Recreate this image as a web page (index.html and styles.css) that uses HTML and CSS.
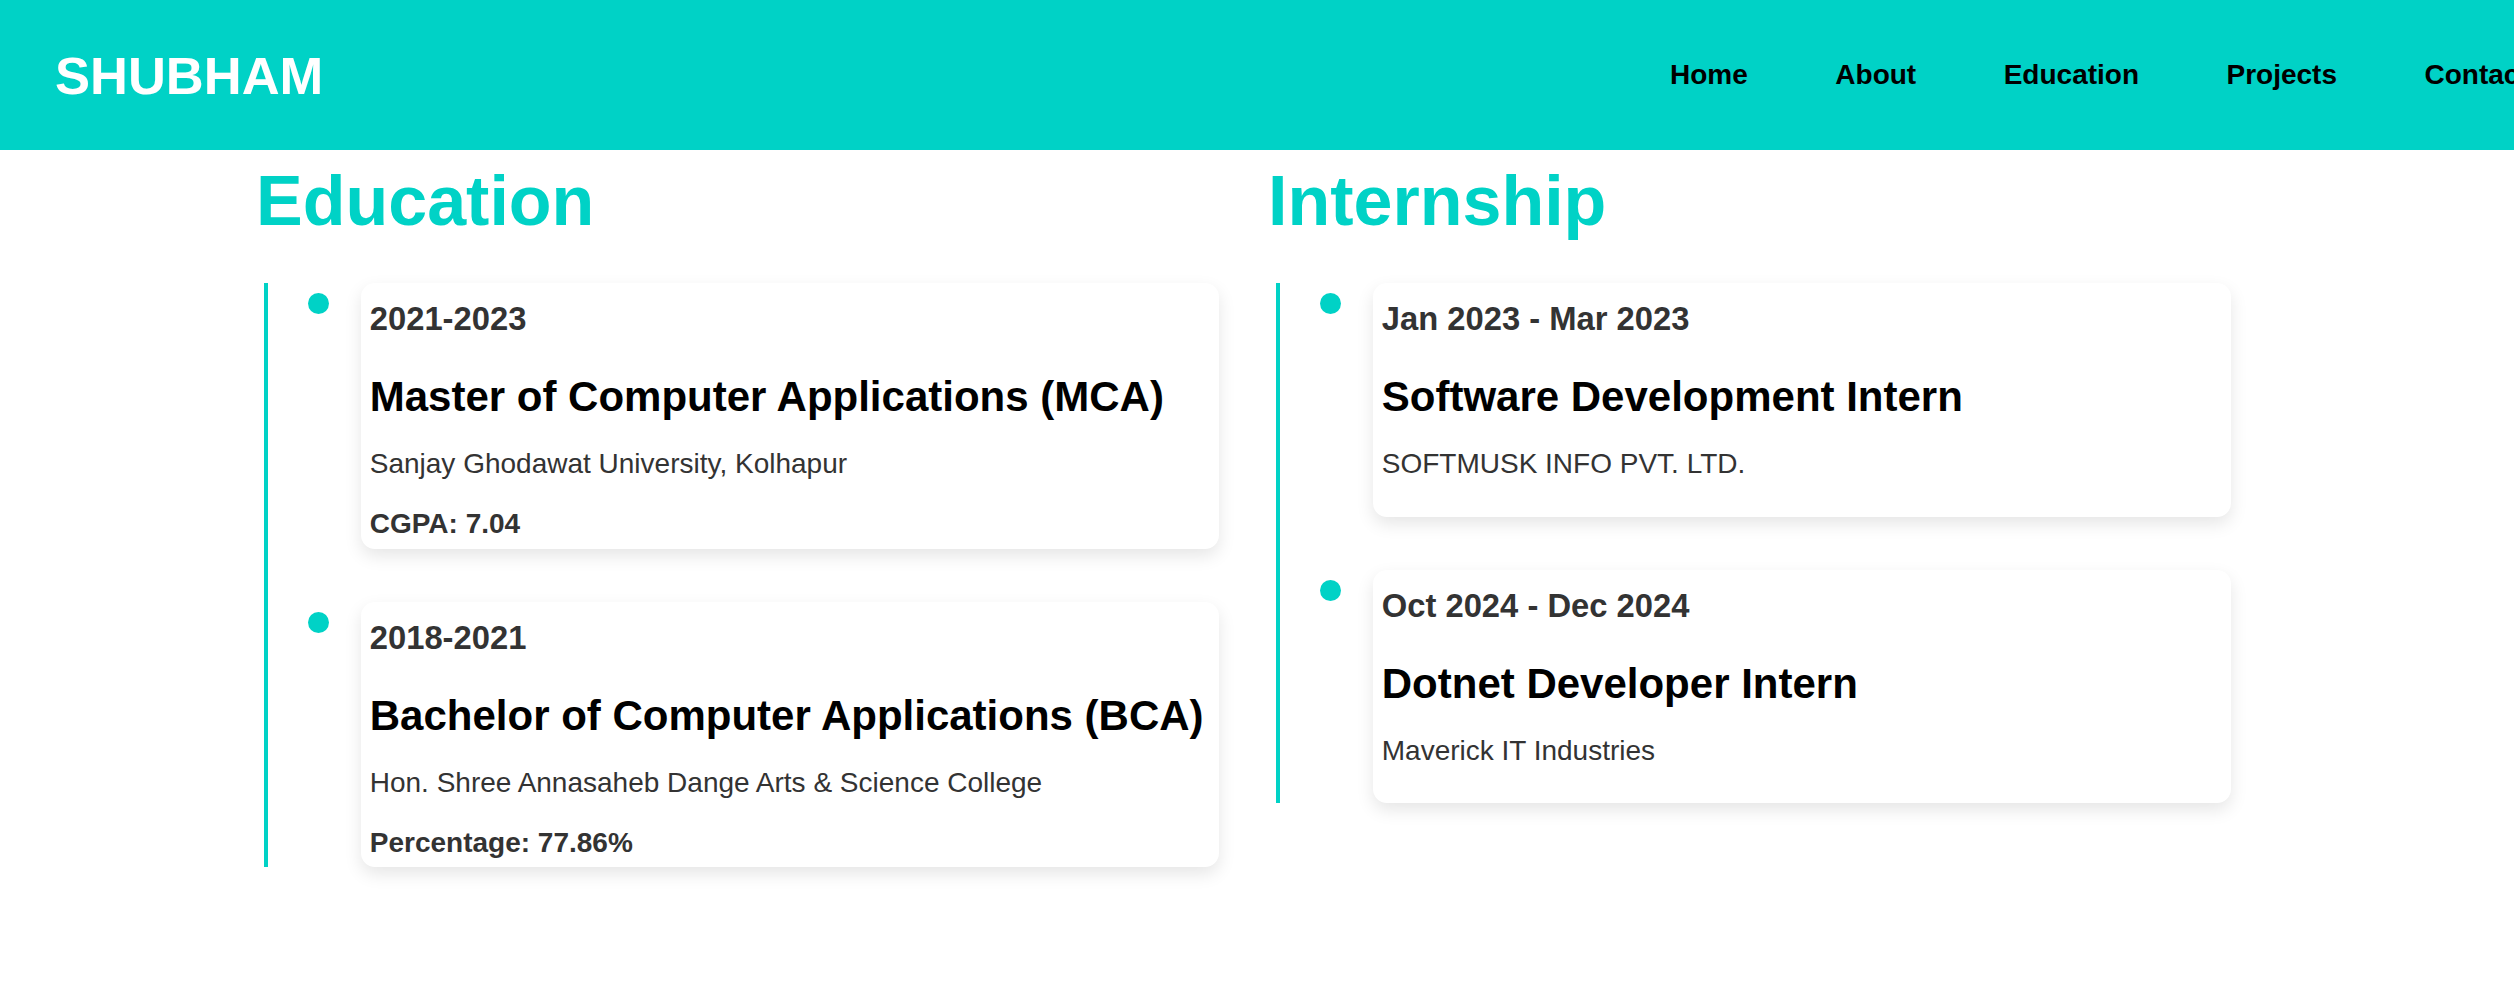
FILE: index.html
```html
<!DOCTYPE html>
<html lang="en">
<head>
<meta charset="utf-8">
<title>Shubham</title>
<link rel="stylesheet" href="styles.css">
</head>
<body>
<header class="site-header">
  <div class="logo">SHUBHAM</div>
  <nav class="nav">
    <ul class="nav-list">
      <li><a href="#">Home</a></li>
      <li><a href="#">About</a></li>
      <li><a href="#">Education</a></li>
      <li><a href="#">Projects</a></li>
      <li><a href="#">Contact</a></li>
    </ul>
  </nav>
</header>
<main class="columns">
  <section class="column">
    <h2 class="section-title">Education</h2>
    <div class="timeline">
      <div class="timeline-item">
        <span class="dot"></span>
        <div class="card">
          <h3 class="date">2021-2023</h3>
          <h4 class="title">Master of Computer Applications (MCA)</h4>
          <p class="place">Sanjay Ghodawat University, Kolhapur</p>
          <div class="score">CGPA: 7.04</div>
        </div>
      </div>
      <div class="timeline-item">
        <span class="dot"></span>
        <div class="card">
          <h3 class="date">2018-2021</h3>
          <h4 class="title">Bachelor of Computer Applications (BCA)</h4>
          <p class="place">Hon. Shree Annasaheb Dange Arts &amp; Science College</p>
          <div class="score">Percentage: 77.86%</div>
        </div>
      </div>
    </div>
  </section>
  <section class="column">
    <h2 class="section-title">Internship</h2>
    <div class="timeline">
      <div class="timeline-item">
        <span class="dot"></span>
        <div class="card">
          <h3 class="date">Jan 2023 - Mar 2023</h3>
          <h4 class="title">Software Development Intern</h4>
          <p class="place">SOFTMUSK INFO PVT. LTD.</p>
        </div>
      </div>
      <div class="timeline-item">
        <span class="dot"></span>
        <div class="card">
          <h3 class="date">Oct 2024 - Dec 2024</h3>
          <h4 class="title">Dotnet Developer Intern</h4>
          <p class="place">Maverick IT Industries</p>
        </div>
      </div>
    </div>
  </section>
</main>
</body>
</html>
```

FILE: styles.css
```css
body {
  margin: 0;
  padding: 0;
  overflow-x: hidden;
  font-family: "Liberation Sans", Arial, sans-serif;
  background: #ffffff;
  color: #333333;
}

.site-header {
  height: 150px;
  box-sizing: border-box;
  background: #00d2c6;
  display: flex;
  align-items: center;
  padding: 0 0 0 55px;
}

.logo {
  font-size: 52.5px;
  font-weight: 700;
  color: #ffffff;
}

.nav {
  margin-left: auto;
  margin-right: -58.5px;
}

.nav-list {
  display: flex;
  list-style: none;
  margin: 0;
  padding: 0;
}

.nav-list li {
  margin: 0 43.75px;
}

.nav-list a {
  color: #000000;
  text-decoration: none;
  font-size: 28px;
  font-weight: 700;
}

.columns {
  display: grid;
  grid-template-columns: 965px 965px;
  column-gap: 47px;
  padding: 0 0 60px 254px;
  margin-top: 10.6px;
}

.section-title {
  font-size: 70px;
  font-weight: 700;
  color: #00d2c6;
  margin: 0 0 42px 2px;
}

.timeline {
  border-left: 4px solid #00d2c6;
  margin-left: 10px;
}

.timeline-item {
  position: relative;
  padding-left: 93px;
  margin-bottom: 53px;
}

.timeline-item:last-child {
  margin-bottom: 0;
}

.dot {
  position: absolute;
  left: 39.75px;
  top: 10px;
  width: 21.5px;
  height: 21.5px;
  border-radius: 50%;
  background: #00d2c6;
}

.card {
  background: #ffffff;
  border-radius: 14px;
  box-shadow: 0 7px 17.5px rgba(0, 0, 0, 0.1);
  padding: 17.5px 8.75px 8.75px;
}

.date {
  font-size: 32.76px;
  font-weight: 700;
  color: #333333;
  margin: 0 0 35px;
}

.title {
  font-size: 42px;
  font-weight: 700;
  color: #000000;
  margin: 0 0 26.7px;
}

.place {
  font-size: 28px;
  color: #333333;
  margin: 0 0 28px;
}

.score {
  font-size: 28px;
  font-weight: 700;
  color: #333333;
}
```
